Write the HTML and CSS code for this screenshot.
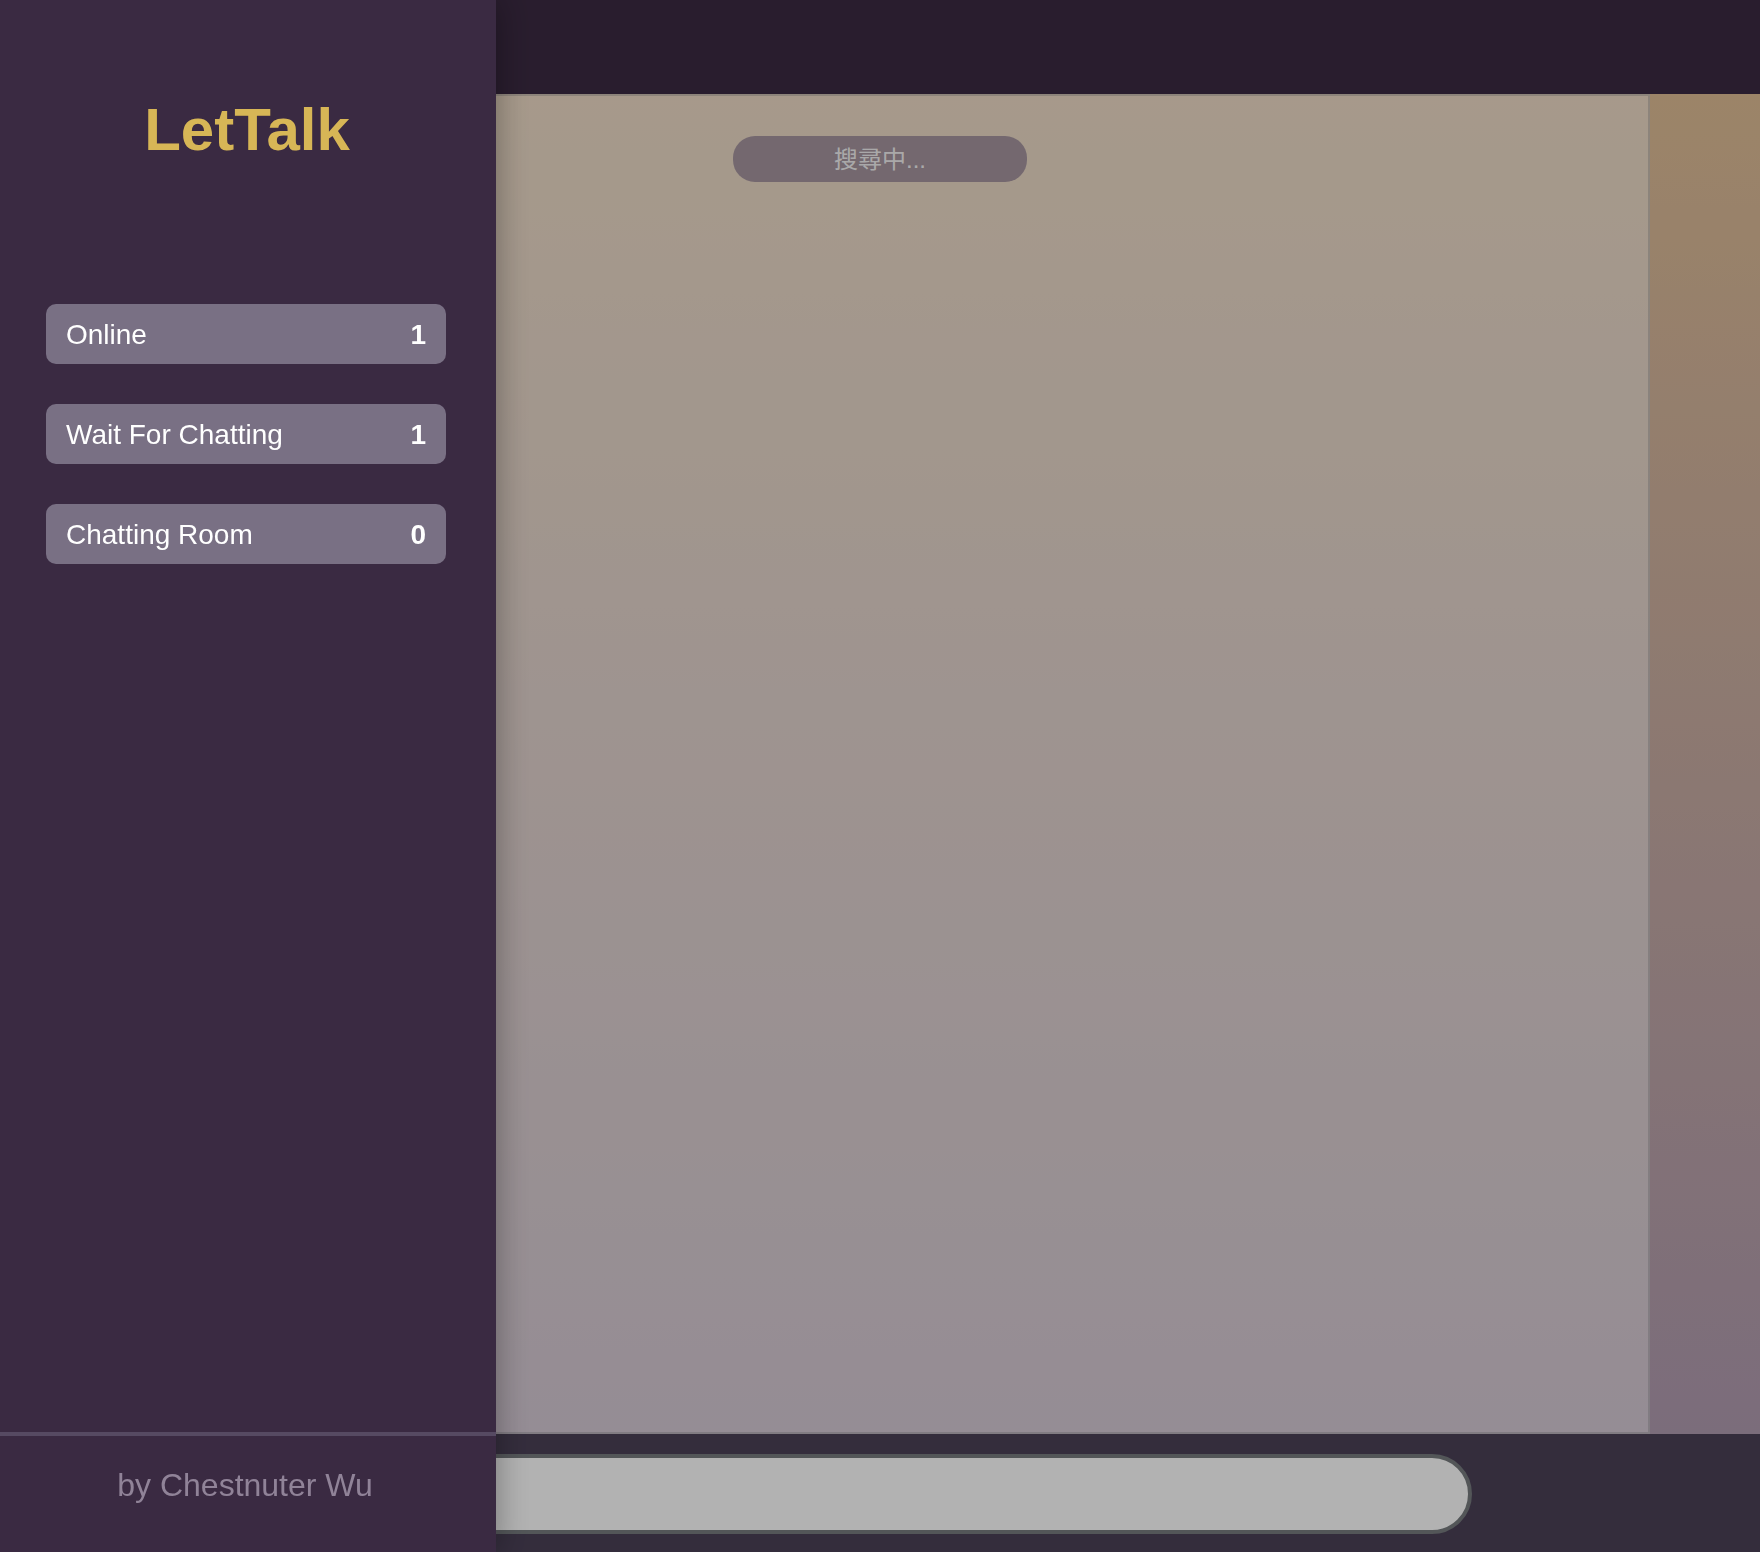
FILE: index.html
```html
<!DOCTYPE html>
<html lang="zh-Hant">
<head>
  <meta charset="utf-8">
  <meta name="viewport" content="width=device-width, initial-scale=1">
  <title>LetTalk</title>
  <link rel="stylesheet" href="styles.css">
</head>
<body>
  <div class="app">
    <header class="topbar"></header>
    <main class="room">
      <section class="messages">
        <p class="notice">搜尋中...</p>
      </section>
    </main>
    <footer class="composer">
      <input class="composer-input" type="text" aria-label="Message">
    </footer>
  </div>

  <div class="backdrop"></div>

  <aside class="sidebar">
    <h1 class="brand">LetTalk</h1>
    <dl class="stats">
      <div class="stat"><dt>Online</dt><dd>1</dd></div>
      <div class="stat"><dt>Wait For Chatting</dt><dd>1</dd></div>
      <div class="stat"><dt>Chatting Room</dt><dd>0</dd></div>
    </dl>
    <p class="credit">by Chestnuter Wu</p>
  </aside>
</body>
</html>
```
FILE: styles.css
```css
* {
  box-sizing: border-box;
}

body {
  margin: 0;
  font-family: "Liberation Sans", "Noto Sans CJK TC", sans-serif;
  color: #fff;
}

h1, p, dl, dd {
  margin: 0;
}

.app {
  display: flex;
  flex-direction: column;
  min-height: 100vh;
}

.topbar {
  height: 94px;
  background: #3b2a42;
}

.room {
  flex: 1;
  display: flex;
  justify-content: center;
  background: linear-gradient(#e0be96, #b19cb1);
}

.messages {
  width: 87.5%;
  padding: 40px;
  border: 2px solid rgba(119, 123, 127, 0.3);
  background: rgba(255, 255, 255, 0.47);
}

.notice {
  width: 294px;
  margin: 0 auto;
  padding-top: 2px;
  border-radius: 22px;
  background: #a696a0;
  color: rgba(255, 255, 255, 0.9);
  font-size: 24px;
  line-height: 44px;
  text-align: center;
}

.composer {
  display: flex;
  justify-content: center;
  padding: 20px 0 18px;
  background: #4b4157;
}

.composer-input {
  width: calc(100% - 576px);
  height: 80px;
  padding: 0 36px;
  border: 4px solid #777b7f;
  border-radius: 40px;
  background: #fff;
  font: inherit;
  font-size: 32px;
}

.backdrop {
  position: fixed;
  inset: 0;
  background: rgba(0, 0, 0, 0.3);
}

.sidebar {
  position: fixed;
  top: 0;
  bottom: 0;
  left: 0;
  display: flex;
  flex-direction: column;
  width: 496px;
  background: #3a2a42;
  box-shadow: 0 0 32px rgba(0, 0, 0, 0.35);
}

.brand {
  padding: 95px 2px 0 0;
  font-size: 60px;
  line-height: 70px;
  text-align: center;
  color: #d7b656;
}

.stats {
  flex: 1;
  display: flex;
  flex-direction: column;
  gap: 40px;
  padding: 139px 50px 0 46px;
}

.stat {
  display: flex;
  justify-content: space-between;
  padding: 2px 20px 0;
  border-radius: 10px;
  background: #797084;
  font-size: 28px;
  line-height: 58px;
}

.stat dd {
  font-weight: bold;
}

.credit {
  height: 120px;
  padding: 29px 6px 0 0;
  border-top: 4px solid #564a62;
  font-size: 32px;
  line-height: 40px;
  text-align: center;
  color: #908398;
}
```
